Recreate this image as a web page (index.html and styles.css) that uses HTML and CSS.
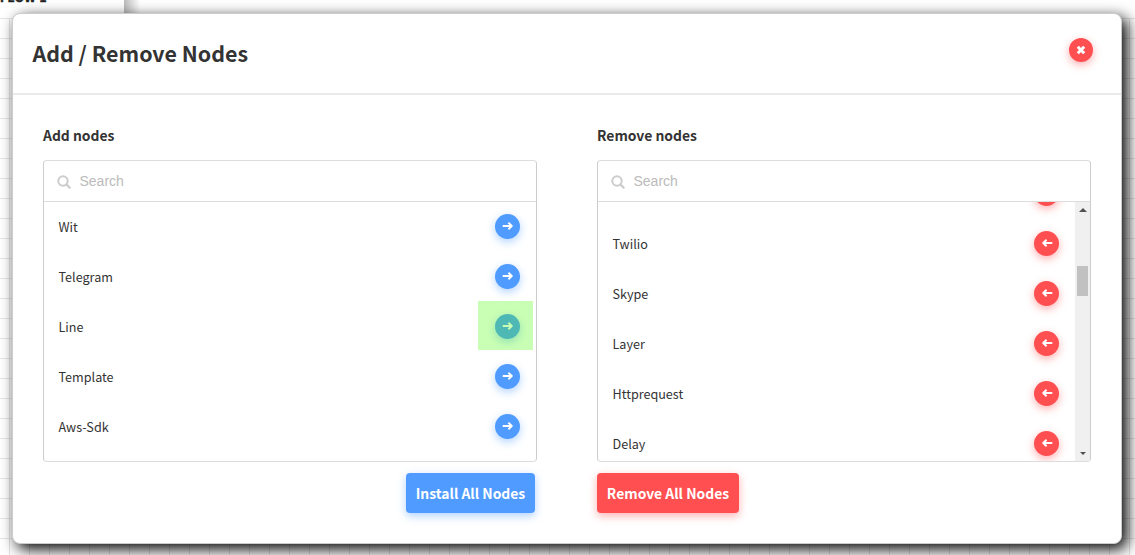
FILE: index.html
```html
<!DOCTYPE html>
<html lang="en">
<head>
<meta charset="utf-8">
<title>Add / Remove Nodes</title>
<link rel="stylesheet" href="styles.css">
</head>
<body>
<svg class="defs" aria-hidden="true">
  <symbol id="arrow" viewBox="0 0 12 12"><path d="M.7 6H9.7M6.4 2.7 9.8 6 6.4 9.3" fill="none" stroke="currentColor" stroke-width="1.9" stroke-linejoin="round"/></symbol>
  <symbol id="search" viewBox="0 0 14 14"><circle cx="6" cy="6" r="4.7" fill="none" stroke="currentColor" stroke-width="2"/><path d="M9.5 9.5 12.6 12.6" stroke="currentColor" stroke-width="2.2" stroke-linecap="round"/></symbol>
  <symbol id="close" viewBox="0 0 10 10"><path d="M1.8 1.8 8.2 8.2M8.2 1.8 1.8 8.2" stroke="currentColor" stroke-width="3"/></symbol>
</svg>
<div class="canvas"></div>
<div class="topbar"></div>
<div class="tab">FLOW 1</div>
<main class="modal">
  <header class="modal-header">
    <h1 class="title">Add / Remove Nodes</h1>
    <button class="round red close"><svg class="close-icon"><use href="#close"/></svg></button>
  </header>
  <div class="columns">
    <section class="column">
      <h2 class="heading">Add nodes</h2>
      <div class="panel">
        <label class="search"><svg class="search-icon"><use href="#search"/></svg><input class="field" placeholder="Search"></label>
        <div class="list">
          <div class="rows">
            <div class="row"><span>Wit</span><button class="round blue"><svg class="arrow"><use href="#arrow"/></svg></button></div>
            <div class="row"><span>Telegram</span><button class="round blue"><svg class="arrow"><use href="#arrow"/></svg></button></div>
            <div class="row marked"><span>Line</span><button class="round blue"><svg class="arrow"><use href="#arrow"/></svg></button></div>
            <div class="row"><span>Template</span><button class="round blue"><svg class="arrow"><use href="#arrow"/></svg></button></div>
            <div class="row"><span>Aws-Sdk</span><button class="round blue"><svg class="arrow"><use href="#arrow"/></svg></button></div>
          </div>
        </div>
      </div>
      <button class="action blue install"><span>Install All Nodes</span></button>
    </section>
    <section class="column">
      <h2 class="heading">Remove nodes</h2>
      <div class="panel">
        <label class="search"><svg class="search-icon"><use href="#search"/></svg><input class="field" placeholder="Search"></label>
        <div class="list">
          <div class="rows scrolled">
            <div class="row"><span></span><button class="round red"><svg class="arrow back"><use href="#arrow"/></svg></button></div>
            <div class="row"><span>Twilio</span><button class="round red"><svg class="arrow back"><use href="#arrow"/></svg></button></div>
            <div class="row"><span>Skype</span><button class="round red"><svg class="arrow back"><use href="#arrow"/></svg></button></div>
            <div class="row"><span>Layer</span><button class="round red"><svg class="arrow back"><use href="#arrow"/></svg></button></div>
            <div class="row"><span>Httprequest</span><button class="round red"><svg class="arrow back"><use href="#arrow"/></svg></button></div>
            <div class="row"><span>Delay</span><button class="round red"><svg class="arrow back"><use href="#arrow"/></svg></button></div>
          </div>
          <div class="scrollbar"><i class="up"></i><i class="thumb"></i><i class="down"></i></div>
        </div>
      </div>
      <button class="action red remove"><span>Remove All Nodes</span></button>
    </section>
  </div>
</main>
</body>
</html>
```
FILE: styles.css
```css
* { box-sizing: border-box; }
body { margin: 0; width: 1135px; height: 555px; overflow: hidden; position: relative; background: #fff; color: #333; font-family: "Noto Sans CJK SC", "Noto Sans", sans-serif; }
button { font: inherit; border: 0; padding: 0; }
.defs { position: absolute; width: 0; height: 0; }
.canvas { position: absolute; inset: 18px 0 0; background-image: linear-gradient(#e5e5e5 1px, transparent 1px), linear-gradient(90deg, #e5e5e5 1px, transparent 1px); background-size: 20px 20px; background-position: 0 0, 9px 0; }
.topbar { position: absolute; left: 124px; right: 0; top: 0; height: 17px; background: linear-gradient(90deg, #bbb, #fff 16px); }
.tab { position: absolute; left: 0; top: -11px; height: 29px; width: 124px; background: #fff; color: #222; font-size: 12px; font-weight: 700; line-height: 15px; letter-spacing: .6px; -webkit-text-stroke: .5px #222; }
.modal { position: absolute; left: 12px; top: 13px; width: 1110px; height: 531px; background: #fff; border: 1px solid #ccc; border-radius: 8px; box-shadow: 5px 5px 15px #000; }
.modal-header { height: 81px; border-bottom: 2px solid #ebebeb; display: flex; justify-content: space-between; padding: 0 28px 0 20px; }
.title { margin: 21px 0 0 -.5px; font-size: 21.4px; line-height: 35px; font-weight: 700; white-space: nowrap; }
.round { flex: none; width: 25px; height: 25px; border-radius: 50%; color: #fff; display: flex; align-items: center; justify-content: center; }
.close { width: 24px; height: 24px; margin-top: 23.5px; }
.close-icon { width: 10px; height: 10px; }
.blue { background: #4f9bff; box-shadow: 0 3px 8px rgba(79,155,255,.45); }
.red { background: #ff4f51; box-shadow: 0 3px 8px rgba(255,79,81,.45); }
.columns { display: grid; grid-template-columns: 494px 494px; gap: 60px; padding: 30px 30px 0; }
.column { display: flex; flex-direction: column; align-items: flex-start; }
.heading { margin: 0 0 15px; font-size: 13.9px; line-height: 20px; font-weight: 700; white-space: nowrap; }
.panel { width: 494px; height: 302px; border: 1px solid #ccc; border-top-color: #ddd; border-bottom-color: #ddd; border-radius: 4px; overflow: hidden; }
.search { display: flex; height: 41px; border-bottom: 1px solid #ddd; align-items: center; padding-left: 13px; }
.search-icon { width: 14px; height: 14px; margin-top: 2px; color: #ccc; }
.field { border: 0; outline: 0; padding: 0; margin-left: 8.5px; width: 380px; font: 14px/20px "Liberation Sans", Arial, sans-serif; }
.field::placeholder { color: #bbb; opacity: 1; }
.list { display: flex; height: 259px; overflow: hidden; }
.rows { flex: 1; }
.scrolled { margin-top: -33px; }
.row { height: 50px; padding: 0 16px 0 14.5px; display: flex; align-items: center; justify-content: space-between; font-size: 12.6px; line-height: 20px; white-space: nowrap; position: relative; }
.row .round { margin-bottom: 2px; }
.marked::after { content: ""; position: absolute; right: 3px; top: -1px; width: 55px; height: 49px; background: rgba(75,255,8,.3); }
.arrow { width: 12px; height: 12px; }
.back { transform: scaleX(-1); }
.scrollbar { width: 15px; background: #f0f0f0; display: flex; flex-direction: column; align-items: center; }
.up, .down { border: 4px solid transparent; }
.up { border-top: 0; border-bottom: 4px solid #505050; margin-top: 6px; }
.down { border-bottom: 0; border-top: 3px solid #505050; border-left-width: 3px; border-right-width: 3px; margin: auto 0 6px; }
.thumb { width: 11px; height: 30px; margin-top: 54px; background: #c1c1c1; }
.action { margin-top: 10.5px; height: 40.5px; border-radius: 4px; color: #fff; font-size: 13.9px; line-height: 20px; font-weight: 700; white-space: nowrap; }
.install { width: 129px; align-self: flex-end; margin-right: 2px; }
.remove { width: 142px; }
```
